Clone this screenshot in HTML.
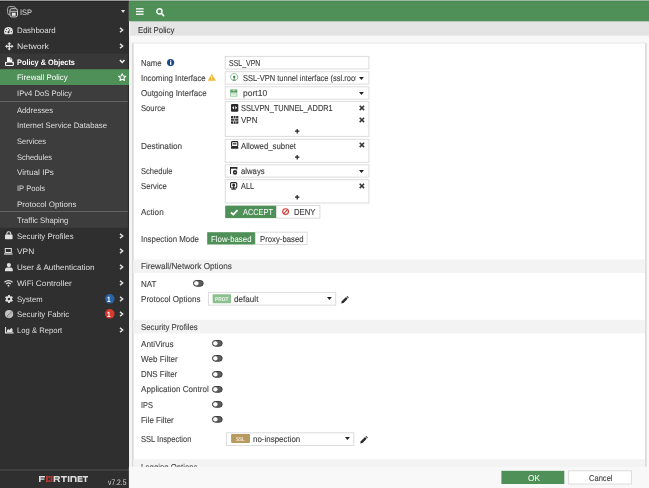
<!DOCTYPE html>
<html><head><meta charset="utf-8"><title>Edit Policy</title><style>
html,body{margin:0;padding:0;}
body{width:649px;height:488px;overflow:hidden;position:relative;background:#f8f8f8;font-family:"Liberation Sans",sans-serif;}
#r{position:absolute;left:0;top:0;width:649px;height:488px;overflow:hidden;will-change:transform;}
#r div,#r svg,#r span{position:absolute;}
#r svg{overflow:visible;}
.t{white-space:nowrap;line-height:12px;height:12px;transform-origin:0 50%;font-family:"Liberation Sans",sans-serif;}
</style></head><body><div id="r">
<svg style="left:-1px;top:-1px;" width="651" height="490"><rect x="1.00" y="1.00" width="649.00" height="488.00" rx="0" fill="#f8f8f8"/></svg>
<svg style="left:-1px;top:-1px;" width="131" height="490"><rect x="1.00" y="1.00" width="128.90" height="488.00" rx="0" fill="#2f2f2f"/></svg>
<svg style="left:127px;top:-1px;" width="523" height="24"><rect x="1.90" y="1.00" width="520.10" height="21.60" rx="0" fill="#4f9058"/></svg>
<svg style="left:127px;top:20px;" width="523" height="17"><rect x="1.90" y="1.60" width="520.10" height="14.10" rx="0" fill="#e4e4e4"/></svg>
<svg style="left:127px;top:20px;" width="5" height="469"><rect x="1.90" y="1.60" width="1.50" height="466.40" rx="0" fill="#f0f0f0"/></svg>
<svg style="left:-1px;top:-1px;" width="131" height="4"><rect x="1.00" y="1.60" width="128.90" height="1.30" rx="0" fill="#232323"/></svg>
<svg style="left:127px;top:-1px;" width="523" height="4"><rect x="1.90" y="1.60" width="520.10" height="1.00" rx="0" fill="#488952"/></svg>
<svg style="left:-1px;top:-1px;" width="651" height="3"><rect x="1.00" y="1.00" width="649.00" height="0.75" rx="0" fill="rgba(205,205,205,0.9)"/></svg>
<svg style="left:130px;top:41px;" width="518" height="430"><rect x="1.40" y="1.60" width="515.60" height="427.40" rx="0" fill="#f0f0f0"/></svg>
<svg style="left:131px;top:42px;" width="517" height="429"><rect x="1.20" y="1.00" width="514.30" height="427.00" rx="0" fill="#d6d6d6"/></svg>
<svg style="left:131px;top:41px;" width="516" height="4"><rect x="1.40" y="1.70" width="513.60" height="1.30" rx="0" fill="#e4e4e4"/></svg>
<svg style="left:132px;top:42px;" width="515" height="429"><rect x="1.70" y="1.50" width="511.40" height="426.50" rx="0" fill="#ffffff"/></svg>
<svg style="left:132px;top:258px;" width="515" height="17"><rect x="1.30" y="1.50" width="511.80" height="13.60" rx="0" fill="#f3f3f3"/></svg>
<svg style="left:132px;top:318px;" width="515" height="17"><rect x="1.30" y="1.80" width="511.80" height="13.60" rx="0" fill="#f3f3f3"/></svg>
<svg style="left:132px;top:458px;" width="515" height="10"><rect x="1.30" y="1.20" width="511.80" height="7.80" rx="0" fill="#f3f3f3"/></svg>
<svg style="left:-1px;top:52px;" width="131" height="19"><rect x="1.00" y="1.60" width="128.90" height="15.60" rx="0" fill="#383838"/></svg>
<svg style="left:-1px;top:68px;" width="131" height="161"><rect x="1.00" y="1.20" width="128.90" height="158.60" rx="0" fill="#3d3d3d"/></svg>
<svg style="left:-1px;top:68px;" width="131" height="18"><rect x="1.00" y="1.20" width="128.90" height="15.80" rx="0" fill="#4f9058"/></svg>
<svg style="left:-1px;top:100px;" width="131" height="3"><rect x="1.00" y="1.00" width="128.90" height="0.80" rx="0" fill="#6e6e6e"/></svg>
<svg style="left:-1px;top:210px;" width="131" height="3"><rect x="1.00" y="1.00" width="128.90" height="0.80" rx="0" fill="#6e6e6e"/></svg>
<svg style="left:126px;top:20px;" width="4" height="51"><rect x="1.90" y="1.60" width="1.00" height="47.60" rx="0" fill="#2a2a2a"/></svg>
<svg style="left:126px;top:84px;" width="4" height="405"><rect x="1.90" y="1.00" width="1.00" height="403.00" rx="0" fill="#2a2a2a"/></svg>
<svg style="left:-1px;top:468px;" width="131" height="4"><rect x="1.00" y="1.60" width="128.90" height="0.80" rx="0" fill="#5a5a5a"/></svg>
<span id="t1" class="t" style="left:19.55px;top:5.90px;font-size:8.6px;color:#dedede;transform:scale(0.8627,0.92) skewX(0.1deg);-webkit-text-stroke:0.0px currentColor;">ISP</span>
<span id="t2" class="t" style="left:16.81px;top:24.00px;font-size:8.6px;color:#dedede;transform:scale(0.9202,0.92) skewX(0.1deg);-webkit-text-stroke:0.0px currentColor;">Dashboard</span>
<span id="t3" class="t" style="left:16.55px;top:39.80px;font-size:8.6px;color:#dedede;transform:scale(1.0139,0.92) skewX(0.1deg);-webkit-text-stroke:0.0px currentColor;">Network</span>
<span id="t4" class="t" style="left:17.07px;top:55.70px;font-size:8.6px;color:#ffffff;font-weight:bold;transform:scale(0.8537,0.92) skewX(0.1deg);-webkit-text-stroke:0px currentColor;">Policy &amp; Objects</span>
<span id="t5" class="t" style="left:16.71px;top:71.30px;font-size:8.6px;color:#ffffff;transform:scale(0.9237,0.92) skewX(0.1deg);-webkit-text-stroke:0.0px currentColor;">Firewall Policy</span>
<span id="t6" class="t" style="left:16.74px;top:87.40px;font-size:8.6px;color:#dedede;transform:scale(0.8900,0.92) skewX(0.1deg);-webkit-text-stroke:0.0px currentColor;">IPv4 DoS Policy</span>
<span id="t7" class="t" style="left:17.00px;top:103.80px;font-size:8.6px;color:#dedede;transform:scale(0.8894,0.92) skewX(0.1deg);-webkit-text-stroke:0.0px currentColor;">Addresses</span>
<span id="t8" class="t" style="left:16.82px;top:118.50px;font-size:8.6px;color:#dedede;transform:scale(0.9059,0.92) skewX(0.1deg);-webkit-text-stroke:0.0px currentColor;">Internet Service Database</span>
<span id="t9" class="t" style="left:17.06px;top:135.20px;font-size:8.6px;color:#dedede;transform:scale(0.8775,0.92) skewX(0.1deg);-webkit-text-stroke:0.0px currentColor;">Services</span>
<span id="t10" class="t" style="left:17.06px;top:151.00px;font-size:8.6px;color:#dedede;transform:scale(0.8739,0.92) skewX(0.1deg);-webkit-text-stroke:0.0px currentColor;">Schedules</span>
<span id="t11" class="t" style="left:16.86px;top:165.50px;font-size:8.6px;color:#dedede;transform:scale(0.9450,0.92) skewX(0.1deg);-webkit-text-stroke:0.0px currentColor;">Virtual IPs</span>
<span id="t12" class="t" style="left:16.84px;top:182.20px;font-size:8.6px;color:#dedede;transform:scale(0.8813,0.92) skewX(0.1deg);-webkit-text-stroke:0.0px currentColor;">IP Pools</span>
<span id="t13" class="t" style="left:16.80px;top:198.00px;font-size:8.6px;color:#dedede;transform:scale(0.9360,0.92) skewX(0.1deg);-webkit-text-stroke:0.0px currentColor;">Protocol Options</span>
<span id="t14" class="t" style="left:17.21px;top:214.20px;font-size:8.6px;color:#dedede;transform:scale(0.8954,0.92) skewX(0.1deg);-webkit-text-stroke:0.0px currentColor;">Traffic Shaping</span>
<span id="t15" class="t" style="left:17.04px;top:229.90px;font-size:8.6px;color:#dedede;transform:scale(0.9110,0.92) skewX(0.1deg);-webkit-text-stroke:0.0px currentColor;">Security Profiles</span>
<span id="t16" class="t" style="left:16.88px;top:244.50px;font-size:8.6px;color:#dedede;transform:scale(0.9735,0.92) skewX(0.1deg);-webkit-text-stroke:0.0px currentColor;">VPN</span>
<span id="t17" class="t" style="left:16.80px;top:261.30px;font-size:8.6px;color:#dedede;transform:scale(0.9387,0.92) skewX(0.1deg);-webkit-text-stroke:0.0px currentColor;">User &amp; Authentication</span>
<span id="t18" class="t" style="left:16.67px;top:277.10px;font-size:8.6px;color:#dedede;transform:scale(0.9639,0.92) skewX(0.1deg);-webkit-text-stroke:0.0px currentColor;">WiFi Controller</span>
<span id="t19" class="t" style="left:17.05px;top:292.90px;font-size:8.6px;color:#dedede;transform:scale(0.8901,0.92) skewX(0.1deg);-webkit-text-stroke:0.0px currentColor;">System</span>
<span id="t20" class="t" style="left:17.05px;top:308.40px;font-size:8.6px;color:#dedede;transform:scale(0.9097,0.92) skewX(0.1deg);-webkit-text-stroke:0.0px currentColor;">Security Fabric</span>
<span id="t21" class="t" style="left:16.83px;top:324.10px;font-size:8.6px;color:#dedede;transform:scale(0.8925,0.92) skewX(0.1deg);-webkit-text-stroke:0.0px currentColor;">Log &amp; Report</span>
<span id="t22" class="t" style="left:108.22px;top:477.30px;font-size:8.0px;color:#d6d6d6;transform:scale(0.8491,1.0) skewX(0.1deg);-webkit-text-stroke:0.0px currentColor;">v7.2.5</span>
<svg style="left:119.40px;top:26.80px;" width="5.00" height="6.00" viewBox="0 0 5 6.0"><path d="M1.0 0.9 L3.7 3.0 L1.0 5.1" fill="none" stroke="#e6e6e6" stroke-width="1.35"/></svg>
<svg style="left:119.40px;top:42.60px;" width="5.00" height="6.00" viewBox="0 0 5 6.0"><path d="M1.0 0.9 L3.7 3.0 L1.0 5.1" fill="none" stroke="#e6e6e6" stroke-width="1.35"/></svg>
<svg style="left:119.40px;top:232.80px;" width="5.00" height="6.00" viewBox="0 0 5 6.0"><path d="M1.0 0.9 L3.7 3.0 L1.0 5.1" fill="none" stroke="#e6e6e6" stroke-width="1.35"/></svg>
<svg style="left:119.40px;top:248.40px;" width="5.00" height="6.00" viewBox="0 0 5 6.0"><path d="M1.0 0.9 L3.7 3.0 L1.0 5.1" fill="none" stroke="#e6e6e6" stroke-width="1.35"/></svg>
<svg style="left:119.40px;top:264.20px;" width="5.00" height="6.00" viewBox="0 0 5 6.0"><path d="M1.0 0.9 L3.7 3.0 L1.0 5.1" fill="none" stroke="#e6e6e6" stroke-width="1.35"/></svg>
<svg style="left:119.40px;top:280.00px;" width="5.00" height="6.00" viewBox="0 0 5 6.0"><path d="M1.0 0.9 L3.7 3.0 L1.0 5.1" fill="none" stroke="#e6e6e6" stroke-width="1.35"/></svg>
<svg style="left:119.40px;top:295.70px;" width="5.00" height="6.00" viewBox="0 0 5 6.0"><path d="M1.0 0.9 L3.7 3.0 L1.0 5.1" fill="none" stroke="#e6e6e6" stroke-width="1.35"/></svg>
<svg style="left:119.40px;top:311.30px;" width="5.00" height="6.00" viewBox="0 0 5 6.0"><path d="M1.0 0.9 L3.7 3.0 L1.0 5.1" fill="none" stroke="#e6e6e6" stroke-width="1.35"/></svg>
<svg style="left:119.40px;top:327.00px;" width="5.00" height="6.00" viewBox="0 0 5 6.0"><path d="M1.0 0.9 L3.7 3.0 L1.0 5.1" fill="none" stroke="#e6e6e6" stroke-width="1.35"/></svg>
<svg style="left:118.90px;top:59.10px;" width="6.40" height="5.00" viewBox="0 0 6.4 5"><path d="M0.9 1.0 L3.2 3.5 L5.5 1.0" fill="none" stroke="#ffffff" stroke-width="1.35"/></svg>
<svg style="left:120.80px;top:10.20px;" width="4.20" height="2.90" viewBox="0 0 4.2 2.9"><path d="M0 0 L4.2 0 L2.1 2.9 Z" fill="#dcdcdc"/></svg>
<svg style="left:104.50px;top:293.90px;" width="9.60" height="9.60" viewBox="0 0 9.6 9.6"><circle cx="4.8" cy="4.8" r="4.8" fill="#2a64a8"/></svg>
<span id="t23" class="t" style="left:107.17px;top:293.80px;font-size:7.6px;color:#ffffff;font-weight:bold;transform:scale(0.8571,1.0) skewX(0.1deg);-webkit-text-stroke:0px currentColor;">1</span>
<svg style="left:104.50px;top:309.40px;" width="9.60" height="9.60" viewBox="0 0 9.6 9.6"><circle cx="4.8" cy="4.8" r="4.8" fill="#d63a2f"/></svg>
<span id="t24" class="t" style="left:107.17px;top:309.30px;font-size:7.6px;color:#ffffff;font-weight:bold;transform:scale(0.8571,1.0) skewX(0.1deg);-webkit-text-stroke:0px currentColor;">1</span>
<svg style="left:118.00px;top:72.90px;" width="8.40" height="8.20" viewBox="0 0 8.4 8.2"><path d="M4.2 0.7 L5.3 3.0 L7.8 3.3 L6.0 5.0 L6.4 7.5 L4.2 6.3 L2.0 7.5 L2.4 5.0 L0.6 3.3 L3.1 3.0 Z" fill="none" stroke="#fff" stroke-width="1.05" stroke-linejoin="round"/></svg>
<svg style="left:6.50px;top:5.90px;" width="11.00" height="11.50" viewBox="0 0 11 11.5"><rect x="0.6" y="0.6" width="8.0" height="8.3" rx="2.2" fill="none" stroke="#a9a9a9" stroke-width="1"/><rect x="2.9" y="2.7" width="7.6" height="8.2" rx="1.8" fill="#2f2f2f" stroke="#cfcfcf" stroke-width="1"/><path d="M3.2 5.3 H10.2" stroke="#cfcfcf" stroke-width="0.9"/><rect x="4.8" y="6.7" width="3.9" height="3.1" fill="#e6e6e6"/></svg>
<svg style="left:4.30px;top:26.50px;" width="9.00" height="7.20" viewBox="0 0 9.0 7.2"><path d="M0.7 7.2 Q0 5.9 0 4.5 A4.5 4.5 0 0 1 9 4.5 Q9 5.9 8.3 7.2 Z" fill="#e0e0e0"/><circle cx="4.5" cy="5.3" r="0.95" fill="#2f2f2f"/><path d="M4.6 5.2 L5.7 2.3" stroke="#2f2f2f" stroke-width="0.8"/><circle cx="1.7" cy="4.6" r="0.55" fill="#2f2f2f"/><circle cx="2.6" cy="2.5" r="0.55" fill="#2f2f2f"/><circle cx="7.3" cy="4.6" r="0.55" fill="#2f2f2f"/><circle cx="4.5" cy="1.6" r="0.5" fill="#2f2f2f"/></svg>
<svg style="left:4.50px;top:41.70px;" width="8.60" height="8.60" viewBox="0 0 8.6 8.6"><path d="M4.3 0 L6.2 2.2 L4.95 2.2 L4.95 3.65 L6.4 3.65 L6.4 2.4 L8.6 4.3 L6.4 6.2 L6.4 4.95 L4.95 4.95 L4.95 6.4 L6.2 6.4 L4.3 8.6 L2.4 6.4 L3.65 6.4 L3.65 4.95 L2.2 4.95 L2.2 6.2 L0 4.3 L2.2 2.4 L2.2 3.65 L3.65 3.65 L3.65 2.2 L2.4 2.2 Z" fill="#e0e0e0"/></svg>
<svg style="left:4.70px;top:57.10px;" width="8.80" height="9.00" viewBox="0 0 8.8 9.0"><path d="M2.0 0.2 L5.5 0.2 L7.3 2.0 L7.3 5.4 L2.0 5.4 Z" fill="#fff"/><path d="M5.3 0.2 V2.2 H7.3" fill="none" stroke="#383838" stroke-width="0.5"/><path d="M0.55 4.7 V7.7 Q0.55 8.45 1.3 8.45 H7.5 Q8.25 8.45 8.25 7.7 V4.7" fill="none" stroke="#fff" stroke-width="1.1"/><path d="M0.5 5.6 H2.2 M6.8 5.6 H8.3" stroke="#fff" stroke-width="0.9"/></svg>
<svg style="left:5.00px;top:231.30px;" width="7.60" height="8.20" viewBox="0 0 7.6 8.2"><rect x="0" y="3.6" width="7.6" height="4.6" rx="0.8" fill="#e0e0e0"/><path d="M1.9 3.8 V2.6 A1.9 1.9 0 0 1 5.7 2.6 V3.8" fill="none" stroke="#e0e0e0" stroke-width="1.1"/></svg>
<svg style="left:4.40px;top:247.80px;" width="8.60" height="6.80" viewBox="0 0 8.6 6.8"><rect x="1.3" y="0.5" width="6" height="4" fill="none" stroke="#e0e0e0" stroke-width="1"/><rect x="0" y="5.4" width="8.6" height="1.2" fill="#e0e0e0"/></svg>
<svg style="left:4.90px;top:263.20px;" width="7.80" height="8.20" viewBox="0 0 7.8 8.2"><circle cx="3.9" cy="2.1" r="2.1" fill="#e0e0e0"/><path d="M0 8.2 V6.6 A2.2 2.2 0 0 1 2.2 4.6 H5.6 A2.2 2.2 0 0 1 7.8 6.6 V8.2 Z" fill="#e0e0e0"/></svg>
<svg style="left:4.30px;top:279.90px;" width="9.00" height="6.60" viewBox="0 0 9 6.6"><path d="M0.5 2.3 A5.6 5.6 0 0 1 8.5 2.3" fill="none" stroke="#e0e0e0" stroke-width="1.25"/><path d="M2.2 4.0 A3.3 3.3 0 0 1 6.8 4.0" fill="none" stroke="#e0e0e0" stroke-width="1.2"/><circle cx="4.5" cy="5.7" r="0.9" fill="#e0e0e0"/></svg>
<svg style="left:4.90px;top:294.80px;" width="8.00" height="8.00" viewBox="0 0 8.0 8.0"><rect x="3.05" y="0" width="1.9" height="8" rx="0.3" fill="#e0e0e0" transform="rotate(0 4 4)"/><rect x="3.05" y="0" width="1.9" height="8" rx="0.3" fill="#e0e0e0" transform="rotate(60 4 4)"/><rect x="3.05" y="0" width="1.9" height="8" rx="0.3" fill="#e0e0e0" transform="rotate(120 4 4)"/><circle cx="4" cy="4" r="3.05" fill="#e0e0e0"/><circle cx="4" cy="4" r="1.3" fill="#2f2f2f"/></svg>
<svg style="left:4.90px;top:310.30px;" width="8.20" height="8.20" viewBox="0 0 8.2 8.2"><circle cx="4.1" cy="4.1" r="4.1" fill="#c4c4c4"/><path d="M2.2 7.0 Q2.6 4.4 4.3 3.9 Q5.9 3.3 6.3 1.2" fill="none" stroke="#7a7a7a" stroke-width="0.9"/><path d="M3.6 7.6 Q4.2 5.6 5.4 5.0 Q6.8 4.3 7.3 2.6" fill="none" stroke="#8a8a8a" stroke-width="0.7"/></svg>
<svg style="left:4.60px;top:326.50px;" width="8.60" height="6.60" viewBox="0 0 8.6 6.6"><path d="M0.55 0 V5.9 H8.6" fill="none" stroke="#e0e0e0" stroke-width="1.1"/><path d="M2.0 4.9 V3.2 L3.3 2.0 L4.5 3.0 L6.2 1.0 L7.5 1.9 V4.9 Z" fill="#e0e0e0"/></svg>
<svg style="left:39.00px;top:476.30px;" width="49.00" height="6.00" viewBox="0 0 49 6"><g fill="#dcdcdc"><path d="M0 0 H6 V1.4 H1.6 V2.4 H5.4 V3.7 H1.6 V6 H0 Z"/><path d="M14.6 0 H19.2 Q21 0 21 1.8 Q21 3.2 19.8 3.6 L21.2 6 H19.4 L18.2 3.8 H16.2 V6 H14.6 Z M16.2 1.4 V2.5 H19 Q19.4 2.5 19.4 1.95 Q19.4 1.4 19 1.4 Z"/><path d="M21.8 0 H28 V1.4 H25.7 V6 H24.1 V1.4 H21.8 Z"/><path d="M28.8 0 H30.4 V6 H28.8 Z"/><path d="M31.4 0 H35.6 Q37.6 0 37.6 2 V6 H36 V2.2 Q36 1.4 35.2 1.4 H33 V6 H31.4 Z"/><path d="M38.6 0 H43.6 V1.4 H40.2 V2.3 H43.4 V3.6 H40.2 V4.6 H43.6 V6 H38.6 Z"/><path d="M44 0 H49 V1.4 H47.3 V6 H45.7 V1.4 H44 Z"/></g><g fill="#d8362c"><rect x="7" y="0" width="1.9" height="1.7"/><rect x="9.3" y="0" width="1.8" height="1.7"/><rect x="11.5" y="0" width="1.9" height="1.7"/><rect x="7" y="2.15" width="1.9" height="1.7"/><rect x="11.5" y="2.15" width="1.9" height="1.7"/><rect x="7" y="4.3" width="1.9" height="1.7"/><rect x="9.3" y="4.3" width="1.8" height="1.7"/><rect x="11.5" y="4.3" width="1.9" height="1.7"/></g></svg>
<svg style="left:135.90px;top:8.00px;" width="7.60" height="7.20" viewBox="0 0 7.6 7.2"><rect x="0" y="0.2" width="7.6" height="1.3" fill="#fff"/><rect x="0" y="2.9" width="7.6" height="1.3" fill="#fff"/><rect x="0" y="5.6" width="7.6" height="1.3" fill="#fff"/></svg>
<svg style="left:155.80px;top:7.60px;" width="8.60" height="8.60" viewBox="0 0 8.6 8.6"><circle cx="3.4" cy="3.4" r="2.6" fill="none" stroke="#fff" stroke-width="1.4"/><path d="M5.4 5.4 L7.7 7.7" stroke="#fff" stroke-width="1.6" stroke-linecap="round"/></svg>
<span id="t25" class="t" style="left:137.72px;top:23.70px;font-size:8.6px;color:#3a3a3a;transform:scale(0.9070,1.0) skewX(0.1deg);-webkit-text-stroke:0.12px currentColor;">Edit Policy</span>
<span id="t26" class="t" style="left:140.80px;top:56.60px;font-size:8.6px;color:#444444;transform:scale(0.8956,1.0) skewX(0.1deg);-webkit-text-stroke:0.12px currentColor;">Name</span>
<span id="t27" class="t" style="left:140.71px;top:71.90px;font-size:8.6px;color:#444444;transform:scale(0.9151,1.0) skewX(0.1deg);-webkit-text-stroke:0.12px currentColor;">Incoming Interface</span>
<span id="t28" class="t" style="left:140.94px;top:87.20px;font-size:8.6px;color:#444444;transform:scale(0.9290,1.0) skewX(0.1deg);-webkit-text-stroke:0.12px currentColor;">Outgoing Interface</span>
<span id="t29" class="t" style="left:140.95px;top:102.40px;font-size:8.6px;color:#444444;transform:scale(0.8914,1.0) skewX(0.1deg);-webkit-text-stroke:0.12px currentColor;">Source</span>
<span id="t30" class="t" style="left:140.68px;top:139.50px;font-size:8.6px;color:#444444;transform:scale(0.9581,1.0) skewX(0.1deg);-webkit-text-stroke:0.12px currentColor;">Destination</span>
<span id="t31" class="t" style="left:140.96px;top:164.90px;font-size:8.6px;color:#444444;transform:scale(0.8771,1.0) skewX(0.1deg);-webkit-text-stroke:0.12px currentColor;">Schedule</span>
<span id="t32" class="t" style="left:140.95px;top:180.30px;font-size:8.6px;color:#444444;transform:scale(0.9009,1.0) skewX(0.1deg);-webkit-text-stroke:0.12px currentColor;">Service</span>
<span id="t33" class="t" style="left:141.40px;top:205.80px;font-size:8.6px;color:#444444;transform:scale(0.9489,1.0) skewX(0.1deg);-webkit-text-stroke:0.12px currentColor;">Action</span>
<span id="t34" class="t" style="left:140.71px;top:232.50px;font-size:8.6px;color:#444444;transform:scale(0.9194,1.0) skewX(0.1deg);-webkit-text-stroke:0.12px currentColor;">Inspection Mode</span>
<span id="t35" class="t" style="left:140.69px;top:260.30px;font-size:8.6px;color:#444444;transform:scale(0.9513,1.0) skewX(0.1deg);-webkit-text-stroke:0.12px currentColor;">Firewall/Network Options</span>
<span id="t36" class="t" style="left:140.70px;top:277.70px;font-size:8.6px;color:#444444;transform:scale(0.9335,1.0) skewX(0.1deg);-webkit-text-stroke:0.12px currentColor;">NAT</span>
<span id="t37" class="t" style="left:140.70px;top:292.80px;font-size:8.6px;color:#444444;transform:scale(0.9376,1.0) skewX(0.1deg);-webkit-text-stroke:0.12px currentColor;">Protocol Options</span>
<span id="t38" class="t" style="left:140.94px;top:320.80px;font-size:8.6px;color:#444444;transform:scale(0.9127,1.0) skewX(0.1deg);-webkit-text-stroke:0.12px currentColor;">Security Profiles</span>
<span id="t39" class="t" style="left:141.40px;top:337.70px;font-size:8.6px;color:#444444;transform:scale(0.9559,1.0) skewX(0.1deg);-webkit-text-stroke:0.12px currentColor;">AntiVirus</span>
<span id="t40" class="t" style="left:141.12px;top:352.90px;font-size:8.6px;color:#444444;transform:scale(0.9402,1.0) skewX(0.1deg);-webkit-text-stroke:0.12px currentColor;">Web Filter</span>
<span id="t41" class="t" style="left:140.71px;top:368.00px;font-size:8.6px;color:#444444;transform:scale(0.9135,1.0) skewX(0.1deg);-webkit-text-stroke:0.12px currentColor;">DNS Filter</span>
<span id="t42" class="t" style="left:141.34px;top:383.30px;font-size:8.6px;color:#444444;transform:scale(0.9398,1.0) skewX(0.1deg);-webkit-text-stroke:0.12px currentColor;">Application Control</span>
<span id="t43" class="t" style="left:140.75px;top:398.50px;font-size:8.6px;color:#444444;transform:scale(0.8627,1.0) skewX(0.1deg);-webkit-text-stroke:0.12px currentColor;">IPS</span>
<span id="t44" class="t" style="left:140.70px;top:413.70px;font-size:8.6px;color:#444444;transform:scale(0.9275,1.0) skewX(0.1deg);-webkit-text-stroke:0.12px currentColor;">File Filter</span>
<span id="t45" class="t" style="left:140.96px;top:433.10px;font-size:8.6px;color:#444444;transform:scale(0.8761,1.0) skewX(0.1deg);-webkit-text-stroke:0.12px currentColor;">SSL Inspection</span>
<svg style="left:223px;top:54px;" width="148" height="17"><rect x="2.20" y="2.40" width="143.70" height="12.60" fill="#fff" stroke="#dcdcdc" stroke-width="1.0"/></svg>
<svg style="left:223px;top:69px;" width="148" height="18"><rect x="2.20" y="2.70" width="143.70" height="12.40" fill="#fff" stroke="#dcdcdc" stroke-width="1.0"/></svg>
<svg style="left:223px;top:84px;" width="148" height="18"><rect x="2.20" y="2.80" width="143.70" height="12.40" fill="#fff" stroke="#dcdcdc" stroke-width="1.0"/></svg>
<svg style="left:223px;top:99px;" width="148" height="40"><rect x="2.20" y="2.60" width="143.70" height="34.80" fill="#fff" stroke="#dcdcdc" stroke-width="1.0"/></svg>
<svg style="left:223px;top:137px;" width="148" height="28"><rect x="2.20" y="2.30" width="143.70" height="23.00" fill="#fff" stroke="#dcdcdc" stroke-width="1.0"/></svg>
<svg style="left:223px;top:162px;" width="148" height="18"><rect x="2.20" y="2.80" width="143.70" height="12.30" fill="#fff" stroke="#dcdcdc" stroke-width="1.0"/></svg>
<svg style="left:223px;top:177px;" width="148" height="28"><rect x="2.20" y="2.70" width="143.70" height="23.30" fill="#fff" stroke="#dcdcdc" stroke-width="1.0"/></svg>
<span id="t46" class="t" style="left:229.49px;top:57.20px;font-size:8.6px;color:#3d3d3d;transform:scale(0.8107,1.0) skewX(0.1deg);-webkit-text-stroke:0.12px currentColor;">SSL_VPN</span>
<div style="left:242px;top:72px;width:113.9px;height:12px;overflow:hidden;">
<span id="t47" class="t" style="left:0.86px;top:0.00px;font-size:8.6px;color:#3d3d3d;transform:scale(0.8731,1.0) skewX(0.1deg);-webkit-text-stroke:0.12px currentColor;">SSL-VPN tunnel interface (ssl.root)</span>
</div>
<span id="t48" class="t" style="left:242.90px;top:87.10px;font-size:8.6px;color:#3d3d3d;transform:scale(0.9957,1.0) skewX(0.1deg);-webkit-text-stroke:0.12px currentColor;">port10</span>
<span id="t49" class="t" style="left:240.77px;top:101.90px;font-size:8.6px;color:#3d3d3d;transform:scale(0.8626,1.0) skewX(0.1deg);-webkit-text-stroke:0.12px currentColor;">SSLVPN_TUNNEL_ADDR1</span>
<span id="t50" class="t" style="left:241.20px;top:113.50px;font-size:8.6px;color:#3d3d3d;transform:scale(0.9294,1.0) skewX(0.1deg);-webkit-text-stroke:0.12px currentColor;">VPN</span>
<span id="t51" class="t" style="left:241.02px;top:139.60px;font-size:8.6px;color:#3d3d3d;transform:scale(0.9059,1.0) skewX(0.1deg);-webkit-text-stroke:0.12px currentColor;">Allowed_subnet</span>
<span id="t52" class="t" style="left:240.97px;top:165.20px;font-size:8.6px;color:#3d3d3d;transform:scale(0.9010,1.0) skewX(0.1deg);-webkit-text-stroke:0.12px currentColor;">always</span>
<span id="t53" class="t" style="left:241.20px;top:180.30px;font-size:8.6px;color:#3d3d3d;transform:scale(0.8533,1.0) skewX(0.1deg);-webkit-text-stroke:0.12px currentColor;">ALL</span>
<svg style="left:359.35px;top:76.65px;" width="4.90" height="3.00" viewBox="0 0 4.9 3.0"><path d="M0 0 H4.9 L2.45 3.0 Z" fill="#222"/></svg>
<svg style="left:359.35px;top:91.85px;" width="4.90" height="3.00" viewBox="0 0 4.9 3.0"><path d="M0 0 H4.9 L2.45 3.0 Z" fill="#222"/></svg>
<svg style="left:359.35px;top:169.85px;" width="4.90" height="3.00" viewBox="0 0 4.9 3.0"><path d="M0 0 H4.9 L2.45 3.0 Z" fill="#222"/></svg>
<svg style="left:359.10px;top:104.70px;" width="5.80" height="5.80" viewBox="0 0 5.8 5.8"><path d="M0.7 0.7 L5.1 5.1 M5.1 0.7 L0.7 5.1" stroke="#383838" stroke-width="1.55"/></svg>
<svg style="left:359.10px;top:116.50px;" width="5.80" height="5.80" viewBox="0 0 5.8 5.8"><path d="M0.7 0.7 L5.1 5.1 M5.1 0.7 L0.7 5.1" stroke="#383838" stroke-width="1.55"/></svg>
<svg style="left:359.10px;top:142.30px;" width="5.80" height="5.80" viewBox="0 0 5.8 5.8"><path d="M0.7 0.7 L5.1 5.1 M5.1 0.7 L0.7 5.1" stroke="#383838" stroke-width="1.55"/></svg>
<svg style="left:359.10px;top:183.10px;" width="5.80" height="5.80" viewBox="0 0 5.8 5.8"><path d="M0.7 0.7 L5.1 5.1 M5.1 0.7 L0.7 5.1" stroke="#383838" stroke-width="1.55"/></svg>
<svg style="left:294.70px;top:128.90px;" width="4.40" height="4.40" viewBox="0 0 4.4 4.4"><path d="M2.2 0 V4.4 M0 2.2 H4.4" stroke="#222" stroke-width="1.2"/></svg>
<svg style="left:294.70px;top:154.60px;" width="4.40" height="4.40" viewBox="0 0 4.4 4.4"><path d="M2.2 0 V4.4 M0 2.2 H4.4" stroke="#222" stroke-width="1.2"/></svg>
<svg style="left:294.70px;top:195.30px;" width="4.40" height="4.40" viewBox="0 0 4.4 4.4"><path d="M2.2 0 V4.4 M0 2.2 H4.4" stroke="#222" stroke-width="1.2"/></svg>
<svg style="left:230.60px;top:104.10px;" width="7.30" height="7.70" preserveAspectRatio="none" viewBox="0 0 8 8"><rect x="0" y="0" width="8" height="8" rx="1.1" fill="#2b2b2b"/><path d="M1.3 4 L3.3 2.2 V5.8 Z M6.7 4 L4.7 2.2 V5.8 Z" fill="#fff"/></svg>
<svg style="left:230.60px;top:115.90px;" width="7.30" height="7.70" preserveAspectRatio="none" viewBox="0 0 8 8"><rect x="0" y="0" width="8" height="8" rx="0.6" fill="#2b2b2b"/><path d="M0 2.75 H8 M0 5.25 H8" stroke="#fff" stroke-width="0.7"/><path d="M2.75 0 V2.7 M5.25 0 V2.7 M4 2.8 V5.2 M2.75 5.3 V8 M5.25 5.3 V8" stroke="#fff" stroke-width="0.7"/></svg>
<svg style="left:230.60px;top:141.40px;" width="7.30" height="7.70" preserveAspectRatio="none" viewBox="0 0 8 8"><rect x="0.6" y="0.6" width="6.8" height="5.2" rx="0.9" fill="#fff" stroke="#2b2b2b" stroke-width="1.2"/><rect x="2" y="2.3" width="4" height="1.3" fill="#2b2b2b"/><rect x="0" y="5.9" width="8" height="2.1" rx="0.4" fill="#2b2b2b"/></svg>
<svg style="left:230.40px;top:167.00px;" width="7.30" height="7.70" preserveAspectRatio="none" viewBox="0 0 8 8"><path d="M0.6 7.4 V0.8 H7.4 V2.6" fill="none" stroke="#2b2b2b" stroke-width="1.1"/><rect x="0" y="0" width="8" height="1.7" fill="#2b2b2b"/><circle cx="5.5" cy="5.6" r="1.55" fill="#fff" stroke="#2b2b2b" stroke-width="1.7"/></svg>
<svg style="left:230.40px;top:182.00px;" width="7.30" height="7.70" preserveAspectRatio="none" viewBox="0 0 8 8"><rect x="0.6" y="0.6" width="6.8" height="5.6" rx="1.2" fill="#fff" stroke="#2b2b2b" stroke-width="1.2"/><circle cx="4" cy="3.1" r="1.6" fill="#2b2b2b"/><rect x="3.3" y="4" width="1.4" height="3.2" fill="#2b2b2b"/><rect x="1.5" y="6.9" width="5" height="1.1" fill="#2b2b2b"/></svg>
<svg style="left:229.90px;top:73.20px;" width="8.40" height="8.40" viewBox="0 0 8.4 8.4"><path d="M2.1 7.0 A3.6 3.6 0 1 1 6.3 7.0" fill="none" stroke="#86c293" stroke-width="0.95"/><circle cx="4.2" cy="3.9" r="1.15" fill="#2f7d40"/><path d="M4.2 4.5 V6.6" stroke="#3b8a4b" stroke-width="0.8"/><rect x="2.5" y="6.5" width="3.4" height="1.25" rx="0.3" fill="#3b8a4b"/></svg>
<svg style="left:230.30px;top:88.90px;" width="7.50" height="7.80" viewBox="0 0 7.5 7.8"><rect x="0" y="0" width="7.5" height="7.8" rx="0.9" fill="#a3cfa8"/><rect x="0.5" y="1.5" width="6.5" height="1.9" fill="#4f9058"/><rect x="2.9" y="0.9" width="1.7" height="1.4" fill="#bfe0c2"/><rect x="1.0" y="3.6" width="5.5" height="3.4" fill="#c9e4cb"/><rect x="1.0" y="5.6" width="5.5" height="1.4" fill="#e3f1e4"/></svg>
<svg style="left:167.20px;top:58.60px;" width="7.20" height="7.20" viewBox="0 0 7.2 7.2"><circle cx="3.6" cy="3.6" r="3.6" fill="#1c4a8a"/><rect x="3.0" y="3.0" width="1.3" height="2.8" fill="#fff"/><rect x="3.0" y="1.3" width="1.3" height="1.2" fill="#fff"/></svg>
<svg style="left:208.00px;top:74.20px;" width="7.60" height="6.80" viewBox="0 0 7.6 6.8"><path d="M3.8 0.2 L7.5 6.6 H0.1 Z" fill="#f0b323" stroke="#f0b323" stroke-width="0.4" stroke-linejoin="round"/><rect x="3.35" y="2.2" width="0.9" height="2.4" fill="#fff"/><rect x="3.35" y="5.0" width="0.9" height="0.9" fill="#fff"/></svg>
<svg style="left:224px;top:204px;" width="54" height="16"><rect x="1.20" y="1.60" width="51.30" height="12.50" rx="0" fill="#4f9058"/></svg>
<svg style="left:274px;top:203px;" width="48" height="18"><rect x="2.50" y="2.60" width="43.40" height="12.50" fill="#fff" stroke="#dcdcdc" stroke-width="1.0"/></svg>
<svg style="left:230.00px;top:208.70px;" width="8.40" height="6.60" viewBox="0 0 8.4 6.6"><path d="M1.0 3.5 L3.3 5.6 L7.5 1.1" fill="none" stroke="#fff" stroke-width="1.75"/></svg>
<span id="t54" class="t" style="left:242.73px;top:205.90px;font-size:8.6px;color:#fff;transform:scale(0.8604,1.0) skewX(0.1deg);-webkit-text-stroke:0.0px currentColor;">ACCEPT</span>
<svg style="left:281.90px;top:208.30px;" width="7.20" height="7.20" viewBox="0 0 7.2 7.2"><circle cx="3.6" cy="3.6" r="2.9" fill="none" stroke="#cf3a30" stroke-width="1.1"/><path d="M1.6 5.6 L5.6 1.6" stroke="#cf3a30" stroke-width="1.1"/></svg>
<span id="t55" class="t" style="left:293.83px;top:205.90px;font-size:8.6px;color:#3d3d3d;transform:scale(0.8967,1.0) skewX(0.1deg);-webkit-text-stroke:0.12px currentColor;">DENY</span>
<svg style="left:206px;top:231px;" width="51" height="15"><rect x="1.20" y="1.20" width="48.30" height="12.30" rx="0" fill="#4f9058"/></svg>
<svg style="left:253px;top:230px;" width="57" height="17"><rect x="2.40" y="2.20" width="51.70" height="12.30" fill="#fff" stroke="#dcdcdc" stroke-width="1.0"/></svg>
<span id="t56" class="t" style="left:211.12px;top:232.50px;font-size:8.6px;color:#fff;transform:scale(0.9116,1.0) skewX(0.1deg);-webkit-text-stroke:0.0px currentColor;">Flow-based</span>
<span id="t57" class="t" style="left:259.83px;top:232.50px;font-size:8.6px;color:#3d3d3d;transform:scale(0.9021,1.0) skewX(0.1deg);-webkit-text-stroke:0.12px currentColor;">Proxy-based</span>
<svg style="left:193.10px;top:280.25px;" width="10.70" height="6.70" viewBox="0 0 10.7 6.7"><rect x="0.5" y="0.5" width="9.7" height="5.7" rx="2.85" fill="#5e5e5e" stroke="#3c3c3c" stroke-width="1.0"/><circle cx="3.35" cy="3.35" r="2.45" fill="#fff" stroke="#555" stroke-width="0.45"/></svg>
<svg style="left:211.60px;top:340.25px;" width="10.70" height="6.70" viewBox="0 0 10.7 6.7"><rect x="0.5" y="0.5" width="9.7" height="5.7" rx="2.85" fill="#5e5e5e" stroke="#3c3c3c" stroke-width="1.0"/><circle cx="3.35" cy="3.35" r="2.45" fill="#fff" stroke="#555" stroke-width="0.45"/></svg>
<svg style="left:211.60px;top:355.45px;" width="10.70" height="6.70" viewBox="0 0 10.7 6.7"><rect x="0.5" y="0.5" width="9.7" height="5.7" rx="2.85" fill="#5e5e5e" stroke="#3c3c3c" stroke-width="1.0"/><circle cx="3.35" cy="3.35" r="2.45" fill="#fff" stroke="#555" stroke-width="0.45"/></svg>
<svg style="left:211.60px;top:370.55px;" width="10.70" height="6.70" viewBox="0 0 10.7 6.7"><rect x="0.5" y="0.5" width="9.7" height="5.7" rx="2.85" fill="#5e5e5e" stroke="#3c3c3c" stroke-width="1.0"/><circle cx="3.35" cy="3.35" r="2.45" fill="#fff" stroke="#555" stroke-width="0.45"/></svg>
<svg style="left:211.60px;top:385.85px;" width="10.70" height="6.70" viewBox="0 0 10.7 6.7"><rect x="0.5" y="0.5" width="9.7" height="5.7" rx="2.85" fill="#5e5e5e" stroke="#3c3c3c" stroke-width="1.0"/><circle cx="3.35" cy="3.35" r="2.45" fill="#fff" stroke="#555" stroke-width="0.45"/></svg>
<svg style="left:211.60px;top:401.05px;" width="10.70" height="6.70" viewBox="0 0 10.7 6.7"><rect x="0.5" y="0.5" width="9.7" height="5.7" rx="2.85" fill="#5e5e5e" stroke="#3c3c3c" stroke-width="1.0"/><circle cx="3.35" cy="3.35" r="2.45" fill="#fff" stroke="#555" stroke-width="0.45"/></svg>
<svg style="left:211.60px;top:416.25px;" width="10.70" height="6.70" viewBox="0 0 10.7 6.7"><rect x="0.5" y="0.5" width="9.7" height="5.7" rx="2.85" fill="#5e5e5e" stroke="#3c3c3c" stroke-width="1.0"/><circle cx="3.35" cy="3.35" r="2.45" fill="#fff" stroke="#555" stroke-width="0.45"/></svg>
<svg style="left:206px;top:290px;" width="132" height="18"><rect x="2.40" y="2.40" width="127.30" height="12.70" fill="#fff" stroke="#dcdcdc" stroke-width="1.0"/></svg>
<svg style="left:211px;top:293px;" width="22" height="12"><rect x="1.60" y="1.30" width="18.50" height="9.00" rx="0.8" fill="#8dc08f"/></svg>
<span id="t58" class="t" style="left:215.18px;top:293.00px;font-size:5.4px;color:#eef7ee;font-weight:bold;transform:scale(0.8949,1.0) skewX(0.1deg);-webkit-text-stroke:0px currentColor;">PROT</span>
<span id="t59" class="t" style="left:233.68px;top:292.80px;font-size:8.6px;color:#3d3d3d;transform:scale(0.9468,1.0) skewX(0.1deg);-webkit-text-stroke:0.12px currentColor;">default</span>
<svg style="left:326.85px;top:297.05px;" width="4.90" height="3.00" viewBox="0 0 4.9 3.0"><path d="M0 0 H4.9 L2.45 3.0 Z" fill="#222"/></svg>
<svg style="left:224px;top:430px;" width="132" height="18"><rect x="2.60" y="2.80" width="127.20" height="12.70" fill="#fff" stroke="#dcdcdc" stroke-width="1.0"/></svg>
<svg style="left:230px;top:433px;" width="21" height="11"><rect x="1.10" y="1.10" width="18.90" height="8.80" rx="0.8" fill="#b99a5e"/></svg>
<span id="t60" class="t" style="left:236.19px;top:432.80px;font-size:5.4px;color:#f3ead8;font-weight:bold;transform:scale(0.8400,1.0) skewX(0.1deg);-webkit-text-stroke:0px currentColor;">SSL</span>
<span id="t61" class="t" style="left:252.84px;top:433.10px;font-size:8.6px;color:#3d3d3d;transform:scale(0.9240,1.0) skewX(0.1deg);-webkit-text-stroke:0.12px currentColor;">no-inspection</span>
<svg style="left:345.05px;top:437.45px;" width="4.90" height="3.00" viewBox="0 0 4.9 3.0"><path d="M0 0 H4.9 L2.45 3.0 Z" fill="#222"/></svg>
<svg style="left:340.90px;top:295.70px;" width="8.00" height="7.60" viewBox="0 0 8.0 7.6"><path d="M0.2 7.4 L0.8 5.2 L5.0 1.0 L6.7 2.7 L2.5 6.9 Z" fill="#2b2b2b"/><path d="M5.5 0.6 L6.3 -0.1 L7.9 1.5 L7.2 2.3 Z" fill="#2b2b2b"/></svg>
<svg style="left:359.50px;top:435.90px;" width="8.00" height="7.60" viewBox="0 0 8.0 7.6"><path d="M0.2 7.4 L0.8 5.2 L5.0 1.0 L6.7 2.7 L2.5 6.9 Z" fill="#2b2b2b"/><path d="M5.5 0.6 L6.3 -0.1 L7.9 1.5 L7.2 2.3 Z" fill="#2b2b2b"/></svg>
<div style="left:133px;top:455px;width:300px;height:11.9px;overflow:hidden;">
<span id="t62" class="t" style="left:7.72px;top:6.00px;font-size:8.6px;color:#444444;transform:scale(0.9008,1.0) skewX(0.1deg);-webkit-text-stroke:0.12px currentColor;">Logging Options</span>
</div>
<svg style="left:127px;top:465px;" width="523" height="24"><rect x="1.90" y="1.80" width="520.10" height="21.20" rx="0" fill="#f8f8f8"/></svg>
<svg style="left:500px;top:469px;" width="66" height="16"><rect x="1.40" y="1.80" width="62.90" height="13.20" rx="0" fill="#4f9058"/></svg>
<svg style="left:566px;top:468px;" width="68" height="18"><rect x="2.60" y="2.80" width="62.80" height="13.20" fill="#fff" stroke="#dcdcdc" stroke-width="1.0"/></svg>
<span id="t63" class="t" style="left:527.83px;top:471.50px;font-size:8.6px;color:#fff;transform:scale(0.9603,1.0) skewX(0.1deg);-webkit-text-stroke:0.0px currentColor;">OK</span>
<span id="t64" class="t" style="left:588.56px;top:471.50px;font-size:8.6px;color:#3d3d3d;transform:scale(0.8792,1.0) skewX(0.1deg);-webkit-text-stroke:0.12px currentColor;">Cancel</span>
</div></body></html>
